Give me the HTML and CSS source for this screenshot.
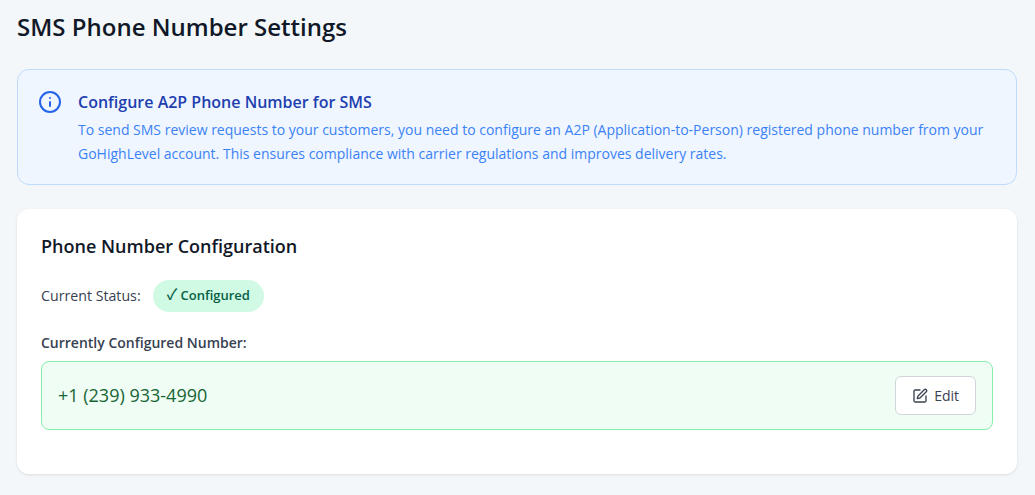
FILE: index.html
```html
<!DOCTYPE html>
<html lang="en">
<head>
<meta charset="utf-8">
<title>SMS Phone Number Settings</title>
<link rel="stylesheet" href="styles.css">
</head>
<body>
<main class="page">
  <h1 class="title">SMS Phone Number Settings</h1>
  <section class="info">
    <svg class="info-icon" viewBox="0 0 24 24" fill="none" stroke="currentColor" stroke-width="2" stroke-linecap="round" stroke-linejoin="round"><circle cx="12" cy="12" r="10"/><path d="M12 16v-4"/><path d="M12 8h.01"/></svg>
    <div class="info-body">
      <h2 class="info-title">Configure A2P Phone Number for SMS</h2>
      <p class="info-text">To send SMS review requests to your customers, you need to configure an A2P (Application-to-Person) registered phone number from your GoHighLevel account. This ensures compliance with carrier regulations and improves delivery rates.</p>
    </div>
  </section>
  <section class="card">
    <h2 class="card-title">Phone Number Configuration</h2>
    <div class="status-row">
      <span class="status-label">Current Status:</span>
      <span class="badge"><span class="check">✓</span> Configured</span>
    </div>
    <div class="number-label">Currently Configured Number:</div>
    <div class="number-box">
      <span class="number">+1 (239) 933-4990</span>
      <button class="edit" type="button">
        <svg class="edit-icon" viewBox="0 0 24 24" fill="none" stroke="currentColor" stroke-width="2" stroke-linecap="round" stroke-linejoin="round"><path d="M12 3H5a2 2 0 0 0-2 2v14a2 2 0 0 0 2 2h14a2 2 0 0 0 2-2v-7"/><path d="M18.375 2.625a1 1 0 0 1 3 3l-9.013 9.014a2 2 0 0 1-.853.505l-2.873.84a.5.5 0 0 1-.62-.62l.84-2.873a2 2 0 0 1 .506-.852z"/></svg>
        Edit
      </button>
    </div>
  </section>
</main>
</body>
</html>
```
FILE: styles.css
```css
* { box-sizing: border-box; }
html, body { margin: 0; padding: 0; }
body { background: #f3f7fa; font-family: "Open Sans", "DejaVu Sans", sans-serif; color: #111827; height: 495px; overflow: hidden; }
.page { padding: 11px 18px 0 17px; }
.title { margin: 0 0 26px; font-size: 24px; line-height: 32px; font-weight: 600; color: #111827; }
.info { display: flex; gap: 16px; padding: 20px; height: 116px; background: #eff6ff; border: 1px solid #bfdbfe; border-radius: 12px; margin-bottom: 24px; }
.info-icon { width: 24px; height: 24px; color: #2563eb; flex: none; }
.info-title { margin: 0 0 4px; font-size: 16px; line-height: 24px; font-weight: 600; color: #1e40af; }
.info-text { margin: 0; font-size: 14px; line-height: 24px; color: #3b82f6; }
.card { height: 265px; background: #fff; border-radius: 12px; padding: 24px; box-shadow: 0 1px 3px rgba(0,0,0,.1); }
.card-title { margin: 0 0 20px; font-size: 18px; line-height: 27px; font-weight: 600; color: #111827; }
.status-row { display: flex; align-items: center; gap: 12px; margin-bottom: 20px; }
.status-label { font-size: 14.2px; line-height: 18px; font-weight: 500; color: #374151; }
.badge { display: inline-block; height: 32px; padding: 0 14px; background: #d1fae5; color: #065f46; border-radius: 16px; font-size: 13px; line-height: 30px; font-weight: 600; white-space: pre; }
.check { font-family: "Noto Sans CJK SC", sans-serif; font-weight: 500; font-size: 15px; line-height: 20px; }
.number-label { font-size: 14px; line-height: 21px; font-weight: 600; color: #374151; margin-bottom: 8px; }
.number-box { display: flex; align-items: center; justify-content: space-between; height: 69px; padding: 0 16px; background: #f0fdf4; border: 1px solid #86efac; border-radius: 8px; }
.number { font-size: 18px; line-height: 27px; color: #166534; font-weight: 500; }
.edit { display: inline-flex; align-items: center; gap: 6px; height: 39px; padding: 0 16px; background: #fff; border: 1px solid #d1d5db; border-radius: 6px; font: 500 14px "Open Sans", sans-serif; color: #374151; }
.edit-icon { width: 16px; height: 16px; color: #374151; }
```
